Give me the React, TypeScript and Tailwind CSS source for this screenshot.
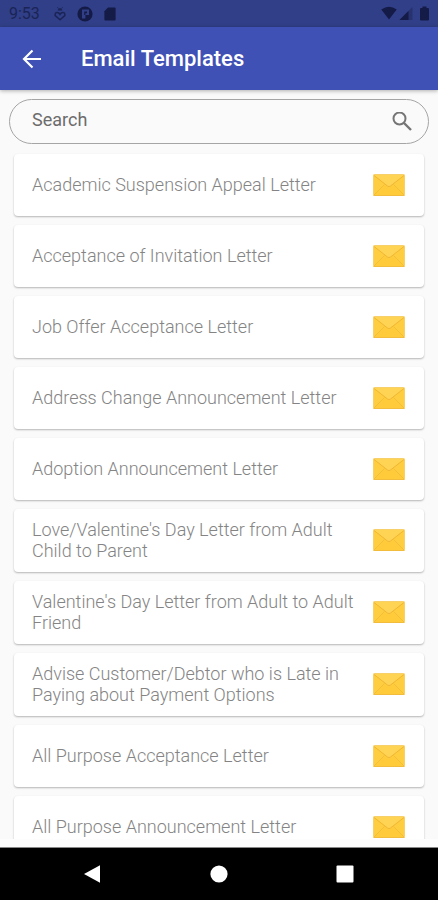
const templates = [
  "Academic Suspension Appeal Letter",
  "Acceptance of Invitation Letter",
  "Job Offer Acceptance Letter",
  "Address Change Announcement Letter",
  "Adoption Announcement Letter",
  "Love/Valentine's Day Letter from Adult Child to Parent",
  "Valentine's Day Letter from Adult to Adult Friend",
  "Advise Customer/Debtor who is Late in Paying about Payment Options",
  "All Purpose Acceptance Letter",
  "All Purpose Announcement Letter",
]

function EnvelopeIcon() {
  return (
    <svg width="32" height="22" viewBox="0 0 32 22" className="shrink-0" aria-hidden="true">
      <rect x="0.5" y="0.5" width="31" height="21" rx="0.8" fill="#ffcd40" stroke="#f7d06a" />
      <path d="M1 21 L12 11 L16 14 L20 11 L31 21 Z" fill="#ffcb3a" />
      <path d="M1 1 H31 L17.5 12 Q16 13.2 14.5 12 Z" fill="#ffd454" />
      <path d="M1 1.5 L14.5 12 Q16 13.2 17.5 12 L31 1.5" fill="none" stroke="#f0b733" strokeWidth="1" />
      <path d="M1 21 L11.5 10.5 M31 21 L20.5 10.5" fill="none" stroke="#f2bc38" strokeWidth="0.9" />
      <path d="M0.5 21.5 H31.5" stroke="#f2bd3c" />
    </svg>
  )
}

function StatusBar() {
  return (
    <div className="h-[27px] shrink-0 bg-[#303f87] text-[#1b2456] pl-[9px] pr-2 flex items-center justify-between">
      <div className="flex items-center pt-px">
        <span className="w-[45px] text-base leading-5">9:53</span>
        <svg width="12" height="14" viewBox="0 0 12 14" fill="none" stroke="currentColor" strokeWidth="1.5" aria-hidden="true">
          <path d="M3.8 3.6 Q3.8 1 6 1 Q8.2 1 8.2 3.6 Z" fill="currentColor" stroke="none" />
          <path d="M3.4 0.2 L4.4 1.6 M8.6 0.2 L7.6 1.6" strokeWidth="0.8" />
          <path d="M6 12.8 L1.2 8.6 Q0.8 5.4 3.2 5.4 Q5 5.4 6 7.4 Q7 5.4 8.8 5.4 Q11.2 5.4 10.8 8.6 Z" />
        </svg>
        <svg width="16" height="16" viewBox="0 0 16 16" className="ml-[11px]" aria-hidden="true">
          <circle cx="8" cy="8" r="7.6" fill="#141b47" />
          <path d="M5 3.6 H12 V9 H8.4 V12.4 H5 Z" fill="#303f87" />
          <path d="M7.2 5.6 H10 V7.2 H8.4 V9 H7.2 Z" fill="#141b47" />
        </svg>
        <svg width="12" height="14" viewBox="0 0 12 14" className="ml-[11px]" aria-hidden="true">
          <path d="M4 0.5 H10.6 Q11.6 0.5 11.6 1.5 V12.5 Q11.6 13.5 10.6 13.5 H1.4 Q0.4 13.5 0.4 12.5 V4.2 Z" fill="#141b47" />
        </svg>
      </div>
      <svg width="49" height="15" viewBox="0 0 49 15" fill="#141b47" aria-hidden="true">
        <path d="M0.3 3.6 Q8 -2.2 15.7 3.6 L8 13.6 Z" />
        <path d="M31.5 1 V14 H18.5 Z" fill="#27326e" />
        <path d="M27.5 5 V14 H18.5 Z" />
        <path d="M41.5 2 V0.5 H45.5 V2 H47 Q48 2 48 3 V13.5 Q48 14.5 47 14.5 H40 Q39 14.5 39 13.5 V3 Q39 2 40 2 Z" />
      </svg>
    </div>
  )
}

function Header() {
  return (
    <header className="relative z-10 h-[63px] shrink-0 bg-[#3f51b5] text-white pl-[21px] flex items-center gap-9 shadow-[0_1px_4px_rgba(0,0,0,0.3)]">
      <button type="button" aria-label="Back" className="w-6 h-6">
        <svg width="24" height="24" viewBox="0 0 24 24" fill="none" stroke="currentColor" strokeWidth="2.2" aria-hidden="true">
          <path d="M20 12 H3.5 M11.5 3.5 L3 12 L11.5 20.5" />
        </svg>
      </button>
      <h1 className="pt-px text-[22px] leading-8 font-medium">Email Templates</h1>
    </header>
  )
}

function SearchBox() {
  return (
    <label className="mt-[9px] mx-[9px] h-[45px] shrink-0 rounded-full border border-[#a5a5a5] pl-[22px] pr-4 flex items-center">
      <input
        type="text"
        placeholder="Search"
        aria-label="Search"
        className="min-w-0 flex-1 pb-1 bg-transparent outline-none text-lg leading-6 text-[#555] placeholder:text-[#6c6c6c] placeholder:opacity-100"
      />
      <svg width="20" height="20" viewBox="0 0 20 20" fill="none" stroke="#757575" strokeWidth="2" aria-hidden="true">
        <circle cx="7.5" cy="6.5" r="6" />
        <path d="M12 11 L19 18" strokeWidth="2.4" />
      </svg>
    </label>
  )
}

function TemplateList() {
  return (
    <main className="flex-1 min-h-0 overflow-hidden mt-2 px-[14px] pt-[2px]">
      <ul className="flex flex-col gap-[9px]">
        {templates.map((title) => (
          <li
            key={title}
            className="min-h-[62px] pt-[10px] pb-[11px] pl-[18px] pr-[19px] rounded bg-white flex items-center justify-between gap-4 shadow-[0_1px_2px_rgba(0,0,0,0.28)]"
          >
            <span className="text-lg leading-[21px] font-light text-[#848484]">{title}</span>
            <EnvelopeIcon />
          </li>
        ))}
      </ul>
    </main>
  )
}

function NavBar() {
  return (
    <nav className="h-[53px] shrink-0 bg-black border-t border-[#888] px-[82px] flex items-center justify-between text-white">
      <button type="button" aria-label="Back">
        <svg width="20" height="20" viewBox="0 0 20 20" fill="currentColor" aria-hidden="true">
          <path d="M18 1.2 V18.8 L2 10 Z" />
        </svg>
      </button>
      <button type="button" aria-label="Home">
        <svg width="18" height="18" viewBox="0 0 18 18" fill="currentColor" aria-hidden="true">
          <circle cx="9" cy="9" r="8.6" />
        </svg>
      </button>
      <button type="button" aria-label="Recent apps">
        <svg width="20" height="20" viewBox="0 0 20 20" fill="currentColor" aria-hidden="true">
          <rect x="0.5" y="1.5" width="17" height="17" rx="1" />
        </svg>
      </button>
    </nav>
  )
}

export default function App() {
  return (
    <div className="h-screen flex flex-col overflow-hidden bg-[#fafafa] font-[Roboto,sans-serif]">
      <StatusBar />
      <Header />
      <SearchBox />
      <TemplateList />
      <div className="h-2 shrink-0 bg-[#fdfdfd]" />
      <NavBar />
    </div>
  )
}
